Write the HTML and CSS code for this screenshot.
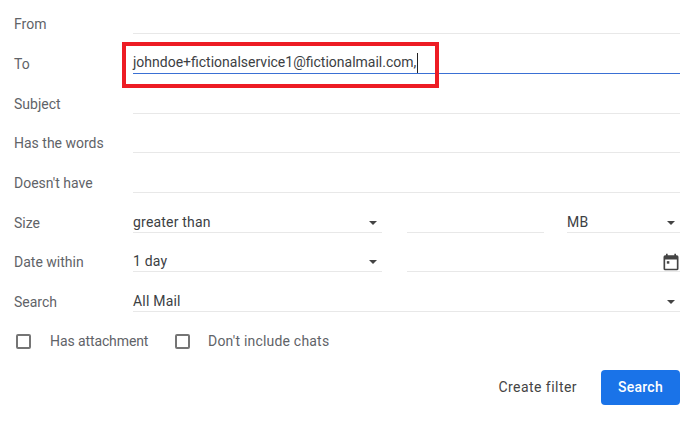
FILE: index.html
```html
<!DOCTYPE html>
<html lang="en">
<head>
    <meta charset="UTF-8">
    <title>Search filter</title>
    <link rel="stylesheet" href="styles.css">
</head>
<body>
    <form class="filter-form">
        <div class="row">
            <div class="label">From</div>
            <div class="field"></div>
        </div>
        <div class="row">
            <div class="label">To</div>
            <div class="field field-active">johndoe+fictionalservice1@fictionalmail.com,<span class="caret"></span></div>
        </div>
        <div class="row">
            <div class="label">Subject</div>
            <div class="field"></div>
        </div>
        <div class="row">
            <div class="label">Has the words</div>
            <div class="field"></div>
        </div>
        <div class="row">
            <div class="label">Doesn't have</div>
            <div class="field"></div>
        </div>
        <div class="row">
            <div class="label">Size</div>
            <div class="field select select-mid">greater than<span class="arrow"></span></div>
            <div class="field size-input"></div>
            <div class="field select unit">MB<span class="arrow"></span></div>
        </div>
        <div class="row">
            <div class="label">Date within</div>
            <div class="field select select-mid">1 day<span class="arrow"></span></div>
            <div class="field date-input">
                <svg class="calendar" width="20" height="20" viewBox="0 0 24 24">
                    <path fill="#444" d="M19 4h-1V2h-2v2H8V2H6v2H5a2 2 0 0 0-2 2v14a2 2 0 0 0 2 2h14a2 2 0 0 0 2-2V6a2 2 0 0 0-2-2zm0 16H5V9h14v11z"/>
                    <rect fill="#444" x="7" y="11" width="3" height="3"/>
                </svg>
            </div>
        </div>
        <div class="row">
            <div class="label">Search</div>
            <div class="field select">All Mail<span class="arrow"></span></div>
        </div>
        <div class="checks">
            <div class="check check-first"><span class="box"></span>Has attachment</div>
            <div class="check check-second"><span class="box"></span>Don't include chats</div>
        </div>
        <div class="actions">
            <span class="create-filter">Create filter</span>
            <span class="search-btn">Search</span>
        </div>
    </form>
    <div class="highlight"></div>
</body>
</html>
```

FILE: styles.css
```css
* {
    margin: 0;
    padding: 0;
    box-sizing: border-box;
}

body {
    position: relative;
    width: 700px;
    height: 422px;
    overflow: hidden;
    background: #fff;
    font-family: Roboto, "Liberation Sans", sans-serif;
    font-size: 14px;
    color: #444;
}

.filter-form {
    padding: 4.2px 20px 0 14px;
}

.row {
    display: flex;
    height: 39.7px;
}

.label {
    width: 119px;
    flex: none;
    line-height: 40px;
    color: #5f6368;
}

.field {
    flex: 1;
    position: relative;
    height: 30px;
    line-height: 37px;
    border-bottom: 1px solid #e8e8e8;
    color: #3c4043;
}

.field-active {
    border-bottom-color: #3a70d4;
}

.caret {
    display: inline-block;
    width: 1px;
    height: 20px;
    margin-left: 1px;
    vertical-align: middle;
    background: #222;
}

.select {
    line-height: 39px;
    letter-spacing: 0.2px;
}

.select-mid {
    flex: none;
    width: 249px;
}

.size-input {
    flex: none;
    width: 137px;
    margin-left: 25px;
}

.unit {
    flex: none;
    width: 113px;
    margin-left: 23px;
}

.date-input {
    flex: none;
    width: 273px;
    margin-left: 25px;
}

.arrow {
    position: absolute;
    right: 5px;
    top: 18px;
    border-left: 4.5px solid transparent;
    border-right: 4.5px solid transparent;
    border-top: 4.5px solid #444;
}

.calendar {
    position: absolute;
    right: -1px;
    top: 10px;
}

.checks {
    display: flex;
    align-items: center;
    height: 39px;
    padding-left: 2px;
    color: #5f6368;
}

.check {
    display: flex;
    align-items: center;
}

.check-first {
    width: 159px;
    letter-spacing: -0.1px;
}

.check-second {
    letter-spacing: 0.2px;
}

.box {
    width: 15px;
    height: 15px;
    margin-right: 19px;
    border: 2px solid #757575;
    border-radius: 2px;
}

.check-second .box {
    margin-right: 18px;
}

.actions {
    display: flex;
    justify-content: flex-end;
    align-items: center;
    margin-top: 9px;
}

.create-filter {
    margin-right: 24px;
    letter-spacing: 0.45px;
    color: #444;
}

.search-btn {
    width: 79px;
    height: 35px;
    line-height: 35px;
    text-align: center;
    font-weight: 500;
    letter-spacing: 0.25px;
    color: #fff;
    background: #1a73e8;
    border-radius: 4px;
}

/* red annotation drawn over the To field */
.highlight {
    position: absolute;
    left: 122px;
    top: 42px;
    width: 317px;
    height: 46px;
    border: 4px solid #ed1c24;
}
```
